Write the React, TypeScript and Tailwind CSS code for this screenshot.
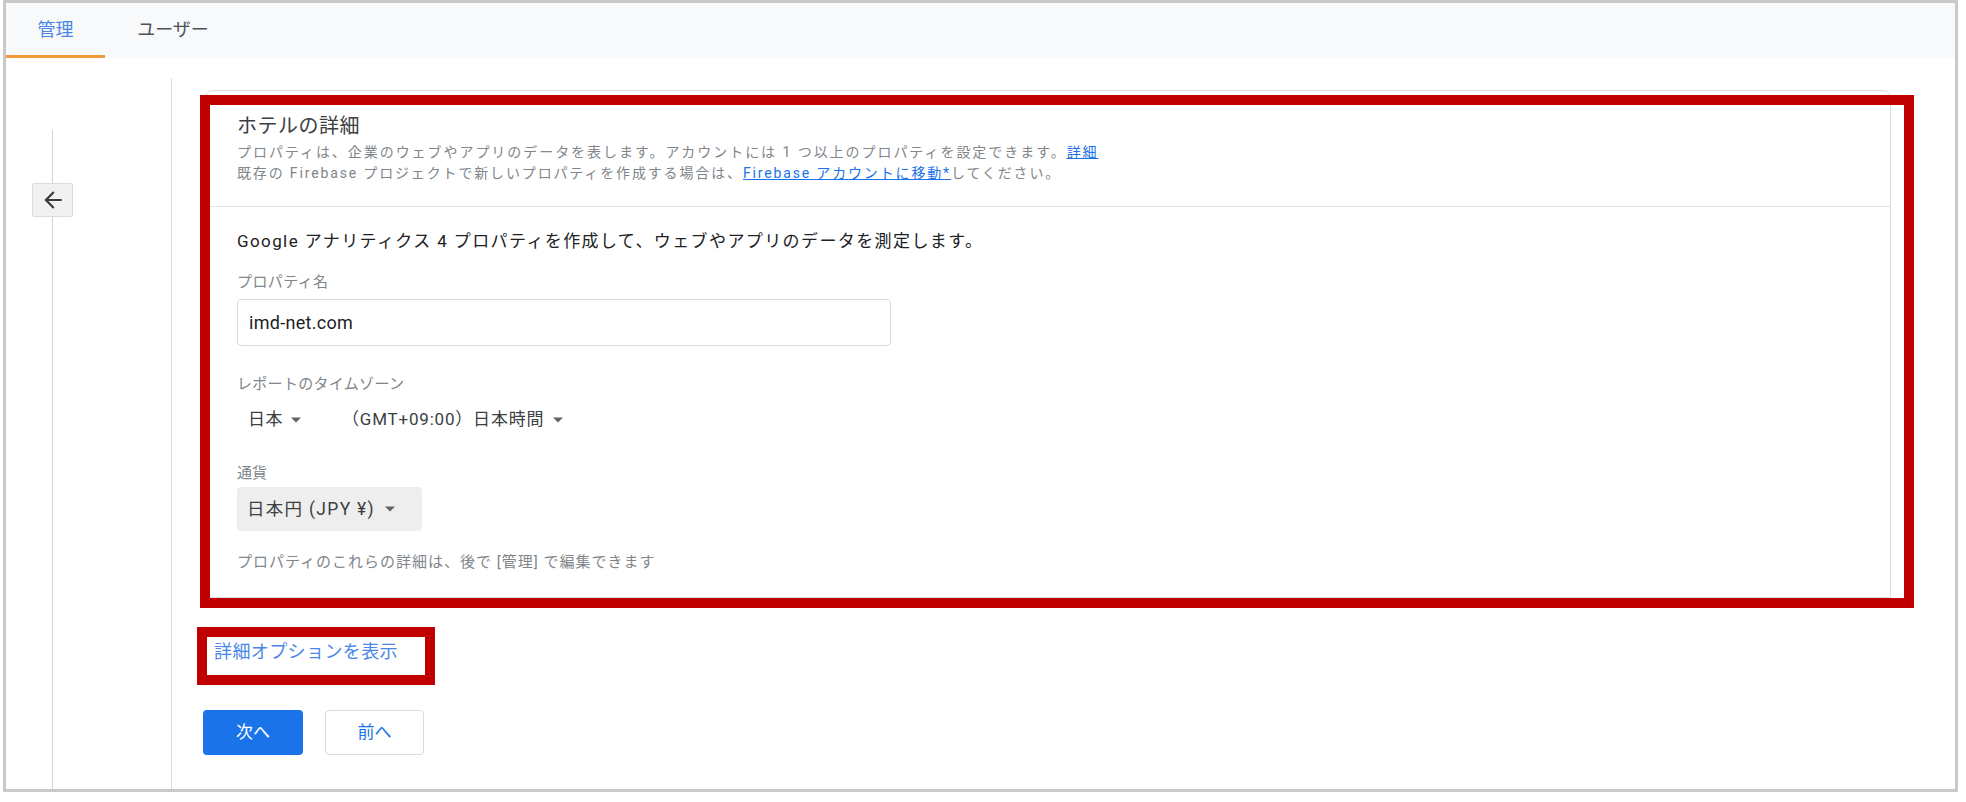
import React from "react";
import { MdArrowBack } from "react-icons/md";

const Caret = () => (
  <svg width="10" height="6" viewBox="0 0 10 5" className="inline-block">
    <path d="M0 0 L10 0 L5 5 Z" fill="#5f6368" />
  </svg>
);

export default function App() {
  return (
    <div
      className="relative w-[1966px] h-[802px] bg-white overflow-hidden"
      style={{ fontFamily: 'Roboto, "Noto Sans CJK JP", sans-serif' }}
    >
      <div className="ml-[3px] w-[1955px] h-[792px] border-[3px] border-[#c9c9c9] flex flex-col">
        {/* Tab bar */}
        <div className="h-[55px] bg-[#f8f9fa] flex shrink-0">
          <div className="w-[99px] flex items-center justify-center border-b-[3px] border-[#f39a38] text-[18px] text-[#4a86e8] pt-[1px]">
            管理
          </div>
          <div className="w-[136px] flex items-center justify-center text-[18px] text-[#4d5156] pb-[2px]">
            ユーザー
          </div>
        </div>

        {/* Body */}
        <div className="flex-1 flex">
          {/* left rail */}
          <div className="w-[166px] pt-[20px] flex shrink-0">
            <div className="flex-1 border-r border-[#dcdcdc] pl-[26px]">
              <div className="w-[41px] h-full flex flex-col items-center">
                <div className="h-[52px]" />
                <div className="w-px h-[53px] bg-[#d3d3d3]" />
                <div className="w-[41px] h-[34px] bg-[#f1f1f1] border border-[#dcdcdc] rounded-[2px] flex items-center justify-center text-[#3c3c3c]">
                  <MdArrowBack size={26} />
                </div>
                <div className="w-px flex-1 bg-[#d3d3d3]" />
              </div>
            </div>
          </div>

          {/* content */}
          <div className="flex-1 flex flex-col">
            <div className="ml-[33px] mt-[32px] w-[1686px] border border-[#dadce0] rounded-t-[8px] bg-white">
              {/* header */}
              <div className="pl-[31px] pt-[21px] pb-[22px] border-b border-[#e0e0e0]">
                <div className="text-[20px] leading-[28px] text-[#3c4043] tracking-[0.5px]">ホテルの詳細</div>
                <div className="mt-[2px] text-[14px] leading-[21px] text-[#80868b] tracking-[1.95px]">
                  プロパティは、企業のウェブやアプリのデータを表します。アカウントには 1 つ以上のプロパティを設定できます。
                  <span className="text-[#1a73e8] underline">詳細</span>
                </div>
                <div className="text-[14px] leading-[21px] text-[#80868b] tracking-[1.85px]">
                  既存の Firebase プロジェクトで新しいプロパティを作成する場合は、
                  <span className="text-[#1a73e8] underline">Firebase アカウントに移動*</span>
                  してください。
                </div>
              </div>
              {/* body */}
              <div className="pl-[31px] pt-[22px] pb-[25px]">
                <div className="text-[17px] leading-[24px] text-[#202124] tracking-[1.4px]">
                  Google アナリティクス 4 プロパティを作成して、ウェブやアプリのデータを測定します。
                </div>
                <div className="mt-[19px] text-[15px] leading-[20px] text-[#80868b] tracking-[0.4px]">プロパティ名</div>
                <div className="mt-[7px] w-[654px] h-[47px] border border-[#dadce0] rounded-[4px] flex items-center pl-[11px] text-[18px] text-[#202124] tracking-[0.3px]">
                  imd-net.com
                </div>
                <div className="mt-[28px] text-[15px] leading-[20px] text-[#80868b] tracking-[0.3px]">レポートのタイムゾーン</div>
                <div className="mt-[8px] h-[36px] flex items-center text-[17px] text-[#3c4043]">
                  <div className="pl-[11px] flex items-center gap-[8px] w-[105px] tracking-[0.5px]">
                    日本 <Caret />
                  </div>
                  <div className="flex items-center gap-[9px] tracking-[0.8px]">
                    （GMT+09:00）日本時間 <Caret />
                  </div>
                </div>
                <div className="mt-[25px] text-[15px] leading-[20px] text-[#80868b]">通貨</div>
                <div className="mt-[4px] w-[185px] h-[44px] bg-[#eeeeee] rounded-[4px] flex items-center pl-[10px] gap-[10px] text-[17.5px] text-[#3c4043] tracking-[1.3px]">
                  <span>日本円 (JPY&nbsp;¥)</span> <Caret />
                </div>
                <div className="mt-[21px] text-[15px] leading-[20px] text-[#80868b] tracking-[1px]">
                  プロパティのこれらの詳細は、後で [管理] で編集できます
                </div>
              </div>
            </div>

            <div className="ml-[42px] mt-[42px] text-[18px] leading-[24px] text-[#4a86e8] tracking-[0.4px]">
              詳細オプションを表示
            </div>

            <div className="ml-[31px] mt-[46px] flex gap-[22px]">
              <div className="w-[100px] h-[45px] rounded-[4px] bg-[#1a73e8] text-white text-[17px] flex items-center justify-center">
                次へ
              </div>
              <div className="w-[99px] h-[45px] rounded-[4px] border border-[#dadce0] bg-white text-[#1a73e8] text-[17px] flex items-center justify-center">
                前へ
              </div>
            </div>
          </div>
        </div>
      </div>

      {/* red annotation boxes */}
      <div className="absolute left-[200px] top-[95px] w-[1714px] h-[513px] border-[10px] border-[#c00000] pointer-events-none" />
      <div className="absolute left-[197px] top-[627px] w-[238px] h-[58px] border-[10px] border-[#c00000] pointer-events-none" />
    </div>
  );
}
